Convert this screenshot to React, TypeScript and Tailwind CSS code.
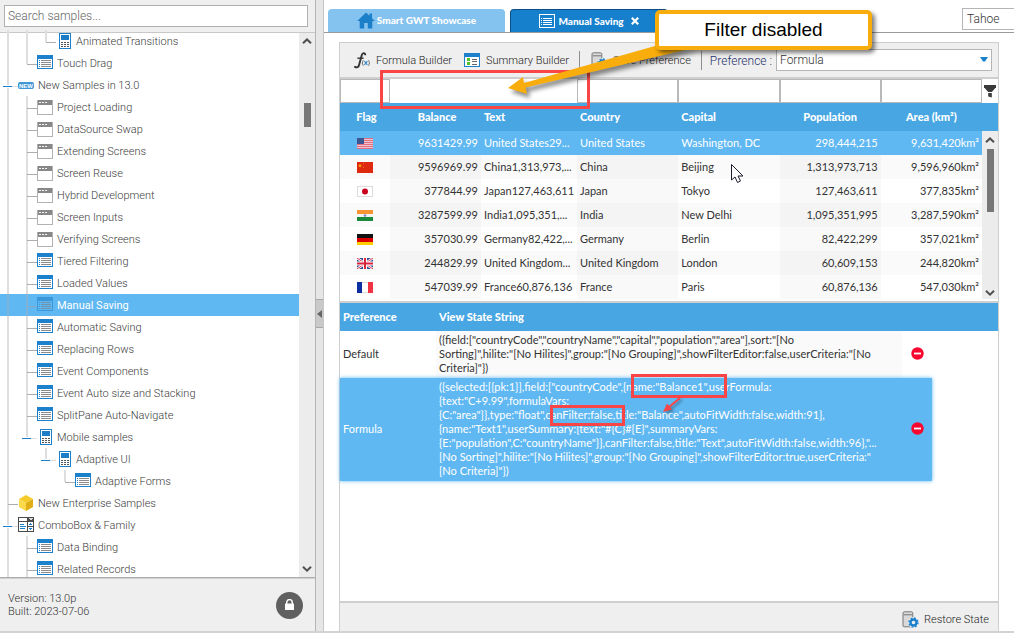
import React from 'react';

type IconKind = 'list' | 'window' | 'mobile' | 'new' | 'cube' | 'combo';
type Joint = 'tee' | 'last' | 'open' | 'openLast';

interface TreeNode {
  label: string;
  depth: number;
  icon: IconKind;
  joint: Joint;
  rails: number[];
  selected?: boolean;
}

const leaf = (label: string, icon: IconKind = 'list', selected = false): TreeNode => ({
  label,
  depth: 2,
  icon,
  joint: 'tee',
  rails: [0],
  selected,
});

const NODES: TreeNode[] = [
  { label: 'Animated Transitions', depth: 3, icon: 'mobile', joint: 'last', rails: [0, 1] },
  { label: 'Touch Drag', depth: 2, icon: 'list', joint: 'last', rails: [0] },
  { label: 'New Samples in 13.0', depth: 1, icon: 'new', joint: 'open', rails: [] },
  leaf('Project Loading', 'window'),
  leaf('DataSource Swap', 'window'),
  leaf('Extending Screens', 'window'),
  leaf('Screen Reuse', 'window'),
  leaf('Hybrid Development', 'window'),
  leaf('Screen Inputs', 'window'),
  leaf('Verifying Screens', 'window'),
  leaf('Tiered Filtering'),
  leaf('Loaded Values'),
  leaf('Manual Saving', 'list', true),
  leaf('Automatic Saving'),
  leaf('Replacing Rows'),
  leaf('Event Components'),
  leaf('Event Auto size and Stacking'),
  leaf('SplitPane Auto-Navigate'),
  { label: 'Mobile samples', depth: 2, icon: 'mobile', joint: 'openLast', rails: [0] },
  { label: 'Adaptive UI', depth: 3, icon: 'mobile', joint: 'openLast', rails: [0] },
  { label: 'Adaptive Forms', depth: 4, icon: 'list', joint: 'last', rails: [0] },
  { label: 'New Enterprise Samples', depth: 1, icon: 'cube', joint: 'tee', rails: [] },
  { label: 'ComboBox & Family', depth: 1, icon: 'combo', joint: 'open', rails: [] },
  leaf('Data Binding'),
  leaf('Related Records'),
];

function Connector({ node }: { node: TreeNode }) {
  const width = 18 + 19 * (node.depth - 1);
  const cx = 8 + 19 * (node.depth - 1);
  const open = node.joint === 'open' || node.joint === 'openLast';
  const half = node.joint === 'last' || node.joint === 'openLast';
  const rail = node.selected ? '#7fb4da' : '#dedede';
  return (
    <svg width={width} height={22} className="shrink-0" shapeRendering="crispEdges" aria-hidden="true">
      {node.rails.map((r) => (
        <rect key={r} x={7 + 19 * r} y={0} width={2} height={22} fill={rail} />
      ))}
      <rect x={cx - 1} y={0} width={2} height={half ? 12 : 22} fill={rail} />
      {open ? (
        <>
          <rect x={cx + 4} y={12} width={6} height={1} fill="#dedede" />
          <rect x={cx - 5} y={11} width={9} height={3} fill="#fff" />
          <rect x={cx - 5} y={12} width={9} height={1} fill="#1a7fcb" />
        </>
      ) : (
        <rect x={cx} y={12} width={10} height={1} fill={node.selected ? '#8aa9bf' : '#adadad'} />
      )}
    </svg>
  );
}

function ListIcon({ muted = false }: { muted?: boolean }) {
  const blue = muted ? '#3a97da' : '#1c81cd';
  const line = muted ? '#6d94ad' : '#8a8a8a';
  return (
    <svg width="16" height="16" viewBox="0 0 16 16" shapeRendering="crispEdges" aria-hidden="true">
      <rect x="0" y="0" width="16" height="14" fill={blue} />
      <rect x="1" y="4" width="14" height="9" fill={muted ? '#5fb8f2' : '#fff'} />
      {[5, 7, 9, 11].map((y) => (
        <g key={y}>
          <rect x="2" y={y} width="1" height="1" fill={blue} />
          <rect x="4" y={y} width="10" height="1" fill={line} />
        </g>
      ))}
    </svg>
  );
}

function WindowIcon() {
  return (
    <svg width="16" height="16" viewBox="0 0 16 16" shapeRendering="crispEdges" aria-hidden="true">
      <rect x="0.5" y="1.5" width="15" height="14" fill="#fff" stroke="#b2b2b2" />
      <rect x="1" y="1" width="14" height="5" fill="#878787" />
      {[2, 5, 8].map((x) => (
        <rect key={x} x={x} y="3" width="2" height="1" fill="#f4f4f4" />
      ))}
    </svg>
  );
}

function MobileIcon() {
  return (
    <svg width="16" height="16" viewBox="0 0 16 16" shapeRendering="crispEdges" aria-hidden="true">
      <rect x="3.5" y="0.5" width="11" height="15" fill="#fff" stroke="#1c81cd" />
      <rect x="5" y="2" width="8" height="5" fill="#1c7dc6" />
      {[9, 11, 13].map((y) =>
        [5, 8, 11].map((x) => <rect key={`${x}-${y}`} x={x} y={y} width="2" height="1" fill="#555" />),
      )}
    </svg>
  );
}

function NewIcon() {
  return (
    <svg width="16" height="16" viewBox="0 0 16 16" aria-hidden="true">
      <rect x="0" y="5" width="16" height="7" rx="2" fill="#3f97d6" />
      <text x="8" y="11" textAnchor="middle" fontFamily="Liberation Sans, sans-serif" fontWeight="700" fontSize="6" fill="#fff">
        NEW
      </text>
    </svg>
  );
}

function CubeIcon() {
  return (
    <svg width="16" height="16" viewBox="0 0 16 16" aria-hidden="true">
      <path d="M8 0 15 4 8 8 1 4Z" fill="#f5cb2b" />
      <path d="M1 4 8 8V16L1 12Z" fill="#fcd94a" />
      <path d="M15 4 8 8V16L15 12Z" fill="#dfae14" />
    </svg>
  );
}

function ComboIcon() {
  return (
    <svg width="16" height="16" viewBox="0 0 16 16" shapeRendering="crispEdges" aria-hidden="true">
      <rect x="0" y="0" width="16" height="15" fill="#4a4a4a" />
      <path d="M1 1h8v3H1zM1 5h8v9H1zM10 5h5v4h-5zM10 10h5v4h-5z" fill="#fff" />
      <path d="M11 1h4v1h-1v1h-2V2h-1z" fill="#ddd" />
      <path d="M2 7h4v1H2zM2 9h6v1H2zM2 11h5v1H2zM11 7h3v1h-3zM12 6h1v1h-1zM11 11h3v1h-3zM12 12h1v1h-1z" fill="#1c81cd" />
    </svg>
  );
}

function NodeIcon({ node }: { node: TreeNode }) {
  switch (node.icon) {
    case 'list':
      return <ListIcon muted={node.selected} />;
    case 'window':
      return <WindowIcon />;
    case 'mobile':
      return <MobileIcon />;
    case 'new':
      return <NewIcon />;
    case 'cube':
      return <CubeIcon />;
    default:
      return <ComboIcon />;
  }
}

function Chevron({ down = false }: { down?: boolean }) {
  return (
    <svg width="10" height="6" viewBox="0 0 10 6" fill="none" stroke="#505050" strokeWidth="2" aria-hidden="true">
      <path d={down ? 'M1 .8 5 4.6 9 .8' : 'M1 5.2 5 1.4 9 5.2'} />
    </svg>
  );
}

function Sidebar() {
  return (
    <aside className="flex w-[316px] shrink-0 flex-col border-r border-[#b5b5b5] bg-[#efefef]">
      <div className="h-8 px-1 pt-[3px]">
        <input
          type="text"
          aria-label="Search samples"
          placeholder="Search samples..."
          className="h-[22px] w-[304px] border border-[#b0b0b0] bg-white px-[3px] text-[12px] font-light text-[#444] outline-none placeholder:text-[#666]"
        />
      </div>
      <div className="flex min-h-0 flex-1 border-t border-b border-t-[#c8c8c8] border-b-[#adadad] bg-white">
        <ul className="-mt-[3px] min-w-0 flex-1 overflow-hidden">
          {NODES.map((node) => (
            <li
              key={node.label}
              className={
                node.selected
                  ? 'flex h-[22px] items-center bg-[#5fb8f2] text-[11px] text-white'
                  : 'flex h-[22px] items-center text-[11px] font-light text-[#3c3c3c]'
              }
            >
              <Connector node={node} />
              <NodeIcon node={node} />
              <span className="pt-[2px] pl-1 whitespace-nowrap">{node.label}</span>
            </li>
          ))}
        </ul>
        <div className="flex w-4 flex-col items-center justify-between bg-[#ececec] py-[5px]">
          <Chevron />
          <div className="flex w-full flex-1 flex-col items-center pt-[59px]">
            <div className="h-6 w-[7px] bg-[#777]" />
          </div>
          <Chevron down />
        </div>
      </div>
      <div className="flex h-[53px] items-center justify-between border-t border-[#d0d0d0] pr-3 pl-2">
        <p className="text-[11px] leading-[13px] font-light text-[#333]">
          Version: 13.0p
          <br />
          Built: 2023-07-06
        </p>
        <button type="button" aria-label="Lock" className="flex size-[27px] items-center justify-center rounded-full bg-[#606060]">
          <svg width="11" height="12" viewBox="0 0 11 12" aria-hidden="true">
            <path d="M2.7 5V3.4a2.8 2.8 0 0 1 5.6 0V5" fill="none" stroke="#fff" strokeWidth="1.5" />
            <rect x="1" y="4.6" width="9" height="6.4" rx=".6" fill="#fff" />
          </svg>
        </button>
      </div>
    </aside>
  );
}

function SaveIcon() {
  return (
    <svg width="17" height="17" viewBox="0 0 17 17" aria-hidden="true">
      <path d="M1 2.2Q1 .8 2.4.8H9.4Q10.8.8 10.8 2.2V14.8Q10.8 15.8 9.8 15.8H2Q1 15.8 1 14.8Z" fill="#d9d9d9" stroke="#777" />
      <path d="M1.6 3.8H10.4" stroke="#777" />
      <circle cx="11.5" cy="11.5" r="5.4" fill="#efefef" />
      <circle cx="11.5" cy="11.5" r="3" fill="none" stroke="#1c81cd" strokeWidth="2.4" />
      <circle cx="11.5" cy="11.5" r="4.5" fill="none" stroke="#1c81cd" strokeWidth="1.4" strokeDasharray="1.8 1.73" />
    </svg>
  );
}

function SummaryIcon() {
  return (
    <svg width="16" height="14" viewBox="0 0 16 14" shapeRendering="crispEdges" aria-hidden="true">
      <rect width="16" height="14" fill="#1c81cd" />
      <rect x="1" y="4" width="14" height="9" fill="#fff" />
      <path d="M3 5h3v3H3zM3 9h3v3H3z" fill="#54c22d" />
      <path d="M8 6h5v1H8zM8 8h5v1H8zM8 11h5v1H8z" fill="#666" />
    </svg>
  );
}

function FormulaIcon() {
  return (
    <svg width="17" height="17" viewBox="0 0 17 17" fill="none" aria-hidden="true">
      <path d="M11.2 2.4C10.6.6 8.6.6 7.8 3L5 13.2C4.5 15.2 2.6 16 1 14.9" stroke="#333" strokeWidth="1.9" strokeLinecap="round" />
      <path d="M3.4 6.2H9.6" stroke="#333" strokeWidth="1.4" />
      <path d="M9.2 8.2Q7.4 11 9.2 13.8M14.6 8.2Q16.4 11 14.6 13.8" stroke="#777" />
      <path d="M10.4 9.2 13.4 13M13.4 9.2 10.4 13" stroke="#2f86c8" strokeWidth="1.1" />
    </svg>
  );
}

function Toolbar() {
  return (
    <div className="flex h-9 items-center border-b-2 border-[#cfcfcf] bg-[#efefef] pr-[6px] pl-[14px] text-[11px] font-light text-[#222]">
      <button type="button" className="flex items-center gap-[5px] whitespace-nowrap">
        <FormulaIcon />
        <span className="pt-[2px]">Formula Builder</span>
      </button>
      <button type="button" className="ml-3 flex items-center gap-[6px] whitespace-nowrap">
        <SummaryIcon />
        <span className="pt-[2px]">Summary Builder</span>
      </button>
      <span className="ml-[10px] h-[19px] w-px bg-[#8f8f8f]" />
      <button type="button" className="ml-[11px] flex items-center gap-[5px] whitespace-nowrap">
        <SaveIcon />
        <span className="pt-[2px]">Save Preference</span>
      </button>
      <span className="ml-[10px] h-[19px] w-px bg-[#8f8f8f]" />
      <label htmlFor="preference" className="mr-1 ml-2 pt-[2px] text-[12px] whitespace-nowrap text-[#1c2f6b]">
        Preference :
      </label>
      <div className="relative min-w-0 flex-1">
        <select
          id="preference"
          className="block h-[22px] w-full appearance-none border border-[#b5b5b5] bg-white pl-[3px] text-[12px] font-light text-[#333]"
          defaultValue="Formula"
        >
          <option>Default</option>
          <option>Formula</option>
        </select>
        <svg width="8" height="5" viewBox="0 0 8 5" className="pointer-events-none absolute top-[8px] right-1" aria-hidden="true">
          <path d="M0 0H8L5 4.4H3Z" fill="#1c81cd" />
        </svg>
      </div>
    </div>
  );
}

function Flag({ code }: { code: string }) {
  const art: Record<string, React.ReactNode> = {
    US: (
      <>
        <rect width="16" height="11" fill="#f0c4cf" />
        {[0, 2, 4, 6, 8, 10].map((y) => (
          <rect key={y} y={y} width="16" height="1" fill="#df6f80" />
        ))}
        <rect width="7" height="6" fill="#3a5693" />
      </>
    ),
    CN: (
      <>
        <rect width="16" height="11" fill="#de2910" />
        <path d="M3 1.5 3.6 3 5 3 3.9 4 4.3 5.4 3 4.6 1.7 5.4 2.1 4 1 3 2.4 3Z" fill="#f5a800" />
        <path d="M6 1h1v1H6zM6 5h1v1H6z" fill="#e8761a" />
      </>
    ),
    JP: (
      <>
        <rect x=".5" y=".5" width="15" height="10" fill="#fff" stroke="#dcdcdc" />
        <circle cx="8" cy="5.5" r="3" fill="#c8001e" />
      </>
    ),
    IN: (
      <>
        <rect width="16" height="11" fill="#f4f4f4" />
        <rect width="16" height="4" fill="#f79433" />
        <rect y="7" width="16" height="4" fill="#1a8a3a" />
        <circle cx="8" cy="5.5" r="1.3" fill="#7c86c6" />
      </>
    ),
    DE: (
      <>
        <rect width="16" height="11" fill="#111" />
        <rect y="4" width="16" height="4" fill="#dd0000" />
        <rect y="8" width="16" height="3" fill="#ffce00" />
      </>
    ),
    GB: (
      <>
        <rect width="16" height="11" fill="#2f4a93" />
        <path d="M0 0 16 11M16 0 0 11" stroke="#fff" strokeWidth="2.4" />
        <path d="M0 0 16 11M16 0 0 11" stroke="#d8243c" strokeWidth=".9" />
        <path d="M8 0V11M0 5.5H16" stroke="#fff" strokeWidth="4" />
        <path d="M8 0V11M0 5.5H16" stroke="#d8243c" strokeWidth="2" />
      </>
    ),
    FR: (
      <>
        <rect x=".5" y=".5" width="15" height="10" fill="#fff" stroke="#dcdcdc" />
        <rect width="5" height="11" fill="#0b2fa0" />
        <rect x="11" width="5" height="11" fill="#ef3340" />
      </>
    ),
  };
  return (
    <svg width="16" height="11" viewBox="0 0 16 11" role="img" aria-label={code} className="mx-auto block">
      {art[code]}
    </svg>
  );
}

const COUNTRIES = [
  ['US', '9631429.99', 'United States29...', 'United States', 'Washington, DC', '298,444,215', '9,631,420km²'],
  ['CN', '9596969.99', 'China1,313,973,...', 'China', 'Beijing', '1,313,973,713', '9,596,960km²'],
  ['JP', '377844.99', 'Japan127,463,611', 'Japan', 'Tokyo', '127,463,611', '377,835km²'],
  ['IN', '3287599.99', 'India1,095,351,...', 'India', 'New Delhi', '1,095,351,995', '3,287,590km²'],
  ['DE', '357030.99', 'Germany82,422,...', 'Germany', 'Berlin', '82,422,299', '357,021km²'],
  ['GB', '244829.99', 'United Kingdom...', 'United Kingdom', 'London', '60,609,153', '244,820km²'],
  ['FR', '547039.99', 'France60,876,136', 'France', 'Paris', '60,876,136', '547,030km²'],
];

function FilterInput({ label }: { label: string }) {
  return <input type="text" aria-label={label} className="block h-6 w-full border border-[#b9b9b9] bg-white px-1 outline-none" />;
}

function CountryGrid() {
  return (
    <div className="h-[224px] overflow-hidden border-b-2 border-[#cfcfcf] font-['Lato',sans-serif]">
      <table className="w-full table-fixed border-collapse text-[11px] whitespace-nowrap text-[#333]">
        <colgroup>
          <col className="w-[50px]" />
          <col className="w-[91px]" />
          <col className="w-[96px]" />
          <col />
          <col />
          <col />
          <col />
          <col className="w-4" />
        </colgroup>
        <thead>
          <tr className="h-6">
            <td className="p-0"><FilterInput label="Filter flag" /></td>
            <td className="p-0" colSpan={2} />
            <td className="p-0"><FilterInput label="Filter country" /></td>
            <td className="p-0"><FilterInput label="Filter capital" /></td>
            <td className="p-0"><FilterInput label="Filter population" /></td>
            <td className="p-0"><FilterInput label="Filter area" /></td>
            <td className="p-0">
              <button type="button" aria-label="Filter" className="flex h-6 w-full items-center justify-center">
                <svg width="12" height="13" viewBox="0 0 12 13" fill="#3a3a3a" aria-hidden="true">
                  <path d="M0 0H12V2.2L7.8 7H4.2L0 2.2Z" />
                  <path d="M4.2 8H7.8V12.6L4.2 11.4Z" />
                </svg>
              </button>
            </td>
          </tr>
          <tr className="h-7 bg-[#48a6e3] text-[11px] text-white [&>th]:font-black">
            <th className="py-0 pr-0 pl-[3px] text-center">Flag</th>
            <th className="py-0 pr-0 pl-[3px] text-center">Balance</th>
            <th className="px-[3px] py-0 text-left">Text</th>
            <th className="px-[3px] py-0 text-left">Country</th>
            <th className="px-[3px] py-0 text-left">Capital</th>
            <th className="p-0 text-center">Population</th>
            <th className="p-0 text-center">Area (km²)</th>
            <th className="p-0" />
          </tr>
        </thead>
        <tbody>
          {COUNTRIES.map((row, r) => (
            <tr
              key={row[0]}
              className={
                r === 0
                  ? 'h-6 bg-[#5fb8f2] text-white'
                  : r % 2 === 1
                    ? 'h-6 bg-[#fafafa] [&>td:nth-child(2)]:bg-[#f4f4f4] [&>td:nth-child(4)]:bg-[#f4f4f4] [&>td:nth-child(6)]:bg-[#f4f4f4]'
                    : 'h-6 bg-white [&>td:nth-child(2)]:bg-[#f9f9f9] [&>td:nth-child(4)]:bg-[#f9f9f9] [&>td:nth-child(6)]:bg-[#f9f9f9]'
              }
            >
              <td className="p-0"><Flag code={row[0]} /></td>
              <td className="px-[3px] py-0 text-right">{row[1]}</td>
              <td className="py-0 pl-[3px] pr-0">{row[2]}</td>
              <td className="px-[3px] py-0">{row[3]}</td>
              <td className="px-[3px] py-0">{row[4]}</td>
              <td className="px-[3px] py-0 text-right">{row[5]}</td>
              <td className="px-[3px] py-0 text-right">{row[6]}</td>
              {r === 0 && (
                <td rowSpan={7} className="bg-[#ececec] p-0 align-top">
                  <div className="flex h-[168px] flex-col items-center pt-[6px] pb-[3px]">
                    <Chevron />
                    <div className="mt-[6px] h-[63px] w-[7px] bg-[#777]" />
                    <div className="flex-1" />
                    <Chevron down />
                  </div>
                </td>
              )}
            </tr>
          ))}
        </tbody>
      </table>
    </div>
  );
}

const DEFAULT_STATE = [
  '({field:["countryCode","countryName","capital","population","area"],sort:"[No',
  'Sorting]",hilite:"[No Hilites]",group:"[No Grouping]",showFilterEditor:false,userCriteria:"[No',
  'Criteria]"})',
];

const FORMULA_STATE = [
  '({selected:[{pk:1}],field:["countryCode",{name:"Balance1",userFormula:',
  '{text:"C+9.99",formulaVars:',
  '{C:"area"}},type:"float",canFilter:false,title:"Balance",autoFitWidth:false,width:91},',
  '{name:"Text1",userSummary:{text:"#{C}#{E}",summaryVars:',
  '{E:"population",C:"countryName"}},canFilter:false,title:"Text",autoFitWidth:false,width:96},"...',
  '[No Sorting]",hilite:"[No Hilites]",group:"[No Grouping]",showFilterEditor:true,userCriteria:"',
  '[No Criteria]"})',
];

function StateLines({ lines }: { lines: string[] }) {
  return (
    <>
      {lines.map((line) => (
        <span key={line} className="block whitespace-nowrap">
          {line}
        </span>
      ))}
    </>
  );
}

function RemoveButton({ name }: { name: string }) {
  return (
    <button type="button" aria-label={`Remove ${name}`} className="mx-auto block">
      <svg width="13" height="13" viewBox="0 0 13 13" className="block" aria-hidden="true">
        <circle cx="6.5" cy="6.5" r="6.2" fill="#f8062f" />
        <rect x="3" y="5.6" width="7" height="1.8" fill="#fff" />
      </svg>
    </button>
  );
}

function PreferenceGrid() {
  return (
    <div className="min-h-0 flex-1 bg-[linear-gradient(#48a6e3,#48a6e3)] bg-[length:100%_28px] bg-no-repeat font-['Lato',sans-serif]">
      <table className="w-[592px] table-fixed border-collapse text-[11px] leading-[14px] text-[#333]">
        <colgroup>
          <col className="w-24" />
          <col />
          <col className="w-[30px]" />
        </colgroup>
        <thead>
          <tr className="h-7 text-left text-[11px] text-white [&>th]:font-black">
            <th className="px-[3px] py-0">Preference</th>
            <th className="px-[3px] py-0">View State String</th>
            <th className="p-0" />
          </tr>
        </thead>
        <tbody>
          <tr>
            <td className="px-[3px] pb-[2px]">Default</td>
            <td className="bg-[#fafafa] px-[3px] pt-[2px] pb-[3px]"><StateLines lines={DEFAULT_STATE} /></td>
            <td className="p-0 pb-[2px]"><RemoveButton name="Default" /></td>
          </tr>
          <tr className="bg-[#5fb8f2] text-white shadow-[0_0_4px_#5fb8f2]">
            <td className="px-[3px] pb-[2px]">Formula</td>
            <td className="px-[3px] pt-[2px] pb-[3px]"><StateLines lines={FORMULA_STATE} /></td>
            <td className="p-0 pb-[2px]"><RemoveButton name="Formula" /></td>
          </tr>
        </tbody>
      </table>
    </div>
  );
}

function Tabs() {
  return (
    <div className="flex h-[33px] items-end border-b border-[#9a9a9a] pl-1 font-['Lato',sans-serif] text-[10px] font-black text-white">
      <button type="button" className="flex h-[23px] w-[177px] items-center justify-center gap-[2px] rounded-t bg-[#84c2ef]">
        <svg width="18" height="17" viewBox="0 0 18 17" fill="#1c7fca" aria-hidden="true">
          <path d="M9 .5 12.5 3.8V1.5H15V6.2L17.8 9H15.3V16.5H10.8V11H7.2V16.5H2.7V9H.2Z" />
        </svg>
        Smart GWT Showcase
      </button>
      <button
        type="button"
        className="ml-[5px] flex h-[23px] w-[158px] items-center justify-center rounded-t border border-b-0 border-[#0c4f87] bg-[#1680cd]"
      >
        <svg width="16" height="14" viewBox="0 0 16 14" shapeRendering="crispEdges" aria-hidden="true">
          <rect x=".5" y=".5" width="15" height="13" fill="#1680cd" stroke="#fff" />
          <path d="M2 4h1v1H2zM2 6h1v1H2zM2 8h1v1H2zM2 10h1v1H2zM4 4h9v1H4zM4 6h9v1H4zM4 8h9v1H4zM4 10h9v1H4z" fill="#fff" />
        </svg>
        <span className="ml-[3px]">Manual Saving</span>
        <svg width="8" height="8" viewBox="0 0 8 8" stroke="#fff" strokeWidth="2.2" className="ml-[7px]" aria-hidden="true">
          <path d="M.8.8 7.2 7.2M7.2.8.8 7.2" />
        </svg>
      </button>
      <select
        aria-label="Skin"
        className="mb-[2px] ml-auto h-[22px] w-[52px] appearance-none border border-r-0 border-[#b5b5b5] bg-white pl-1 font-['Roboto',sans-serif] text-[12px] font-light text-[#333]"
      >
        <option>Tahoe</option>
      </select>
    </div>
  );
}

function Annotations() {
  return (
    <div className="pointer-events-none absolute inset-0 overflow-hidden">
      <svg width="1014" height="634" viewBox="0 0 1014 634" fill="none" className="absolute top-0 left-0" aria-hidden="true">
        <g stroke="#f94545" strokeWidth="3">
          <rect x="381.5" y="71.5" width="207" height="36" />
          <rect x="632.5" y="375.5" width="93" height="21" />
          <rect x="551.5" y="406.5" width="72" height="18" />
        </g>
        <g className="drop-shadow-[2px_2px_1px_rgba(0,0,0,0.3)]">
          <path d="M680 398 669 407" stroke="#f94545" strokeWidth="2" />
          <path d="M663 412 667 403.500 672 409.500Z" fill="#f94545" />
        </g>
        <path
          d="M508 88 523 77 524 83 655 46 694 48 664 55 525.500 87.500 527 94Z"
          fill="#f9ad0c"
          className="drop-shadow-[3px_4px_2px_rgba(0,0,0,0.45)]"
        />
        <path d="M731.500 164.500V180L735 177 737.500 182.500 740.500 181 738 176H743Z" fill="#fff" stroke="#1c1c2c" />
      </svg>
      <div className="absolute top-[10px] left-[655px] flex h-10 w-[217px] items-center justify-center rounded-[5px] border-4 border-[#f9ad0c] bg-white font-['Liberation_Sans',sans-serif] text-[19px] text-black shadow-[3px_3px_4px_rgba(0,0,0,0.5)]">
        Filter disabled
      </div>
    </div>
  );
}

export default function App() {
  return (
    <div className="relative flex h-screen flex-col overflow-hidden bg-white pb-px font-['Roboto',sans-serif]">
      <div className="flex min-h-0 flex-1 border-b-2 border-[#d2d2d2]">
        <Sidebar />
        <div className="flex w-2 shrink-0 flex-col border-r border-[#c6c6c6] bg-[#e6e6e6] pt-[299px]">
          <button type="button" aria-label="Collapse sidebar" className="flex h-[29px] items-center justify-center border-y border-[#a8a8a8] bg-[#c9c9c9]">
            <svg width="5" height="8" viewBox="0 0 5 8" fill="#666" aria-hidden="true">
              <path d="M5 0V8L0 4Z" />
            </svg>
          </button>
        </div>
        <main className="flex min-w-0 flex-1 flex-col">
          <Tabs />
          <section className="mt-[9px] mr-[15px] ml-[15px] flex min-h-0 flex-1 flex-col border border-b-0 border-[#cfcfcf]">
            <Toolbar />
            <CountryGrid />
            <PreferenceGrid />
            <div className="flex h-[30px] items-center justify-end border-t-2 border-[#cfcfcf] bg-[#efefef] pr-[9px] text-[11px] font-light text-[#222]">
              <button type="button" className="flex items-center gap-[5px] pt-1">
                <SaveIcon />
                <span className="pt-[2px]">Restore State</span>
              </button>
            </div>
          </section>
        </main>
      </div>
      <Annotations />
    </div>
  );
}
